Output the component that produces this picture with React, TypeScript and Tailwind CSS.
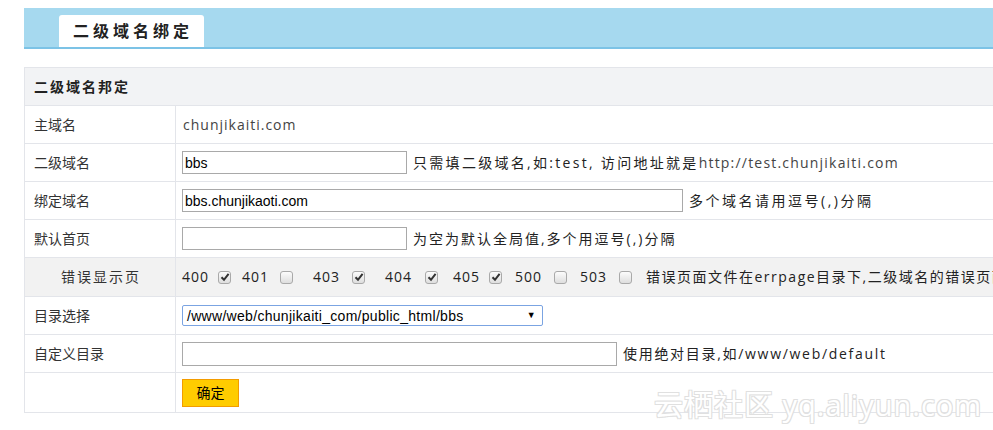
import React from "react";

const cjk = { fontFamily: '"Open Sans", "Noto Sans CJK SC", sans-serif' };
const arial = { fontFamily: '"Liberation Sans", Arial, "Noto Sans CJK SC", sans-serif' };

function Box({ checked }: { checked?: boolean }) {
  return (
    <span className="inline-flex h-[13px] w-[13px] items-center justify-center rounded-[3px] border border-[#a9a9a9] bg-gradient-to-b from-[#fcfcfc] to-[#dedede]">
      {checked && (
        <svg width="10" height="10" viewBox="0 0 10 10">
          <path d="M1.5 5.2 L4 7.8 L8.6 1.8" fill="none" stroke="#333" strokeWidth="2" />
        </svg>
      )}
    </span>
  );
}

function Row({
  label,
  children,
  gray,
  center,
  h = "h-[38px]",
}: {
  label?: string;
  children?: React.ReactNode;
  gray?: boolean;
  center?: boolean;
  h?: string;
}) {
  return (
    <div className={`flex ${h} border-b border-[#e3e5ea] ${gray ? "bg-[#f2f2f2]" : "bg-white"}`}>
      <div
        className={`flex w-[151px] shrink-0 items-center border-r border-[#e3e5ea] ${
          center ? "justify-center pl-[2px] tracking-[2px]" : "pl-[9px]"
        }`}
      >
        {label}
      </div>
      <div className="flex flex-1 items-center gap-[6px] pl-[6px]">{children}</div>
    </div>
  );
}

// code, checked, gap before box, gap after box
const codes: { c: string; on: boolean; ml: string; mr: string }[] = [
  { c: "400", on: true, ml: "ml-[9px]", mr: "mr-[11px]" },
  { c: "401", on: false, ml: "ml-[11px]", mr: "mr-[20px]" },
  { c: "403", on: true, ml: "ml-[12px]", mr: "mr-[20px]" },
  { c: "404", on: true, ml: "ml-[13px]", mr: "mr-[15px]" },
  { c: "405", on: true, ml: "ml-[9px]", mr: "mr-[13px]" },
  { c: "500", on: false, ml: "ml-[12px]", mr: "mr-[13px]" },
  { c: "503", on: false, ml: "ml-[12px]", mr: "mr-[14px]" },
];

export default function App() {
  return (
    <div className="relative h-[430px] w-[993px] overflow-hidden bg-white text-sm text-[#333]" style={cjk}>
      <div className="w-[1200px] pl-6 pt-2">
        {/* top bar */}
        <div className="flex h-[41px] items-end border-b-2 border-[#7cc3e6] bg-[#a6d9ef] pl-[35px]">
          <div className="flex h-[32px] w-[145px] items-center rounded-t-[3px] bg-white pl-[14px] text-base font-semibold tracking-[4px] text-[#222]">
            二级域名绑定
          </div>
        </div>

        {/* table */}
        <div className="mt-[18px] border-l border-t border-[#e3e5ea]">
          <div className="flex h-[38px] items-center border-b border-[#e3e5ea] bg-[#f2f3f5] pl-[9px] font-semibold tracking-[2px] text-[#222]">
            二级域名邦定
          </div>
          <Row label="主域名">
            <span className="pl-[1px] tracking-[1px] text-[#444]">chunjikaiti.com</span>
          </Row>
          <Row label="二级域名">
            <input
              readOnly
              value="bbs"
              className="h-[23px] w-[225px] border border-[#a9a9a9] px-[2px] text-sm text-black outline-none"
              style={arial}
            />
            <span className="whitespace-nowrap tracking-[2.3px] text-[#222]">
              只需填二级域名,如:test, 访问地址就是
              <span className="tracking-[1.2px] text-[#444]">http://test.chunjikaiti.com</span>
            </span>
          </Row>
          <Row label="绑定域名">
            <input
              readOnly
              value="bbs.chunjikaoti.com"
              className="h-[23px] w-[501px] border border-[#a9a9a9] px-[2px] text-sm text-black outline-none"
              style={arial}
            />
            <span className="tracking-[2.5px] text-[#222]">多个域名请用逗号(,)分隔</span>
          </Row>
          <Row label="默认首页">
            <input
              readOnly
              value=""
              className="h-[23px] w-[225px] border border-[#a9a9a9] px-[2px] text-sm outline-none"
              style={arial}
            />
            <span className="tracking-[2px] text-[#222]">为空为默认全局值,多个用逗号(,)分隔</span>
          </Row>
          <Row label="错误显示页" gray center h="h-[39px]">
            <div className="flex items-center whitespace-nowrap text-[#222]">
              {codes.map((k) => (
                <React.Fragment key={k.c}>
                  <span className="w-[27px] tracking-[1px]">{k.c}</span>
                  <span className={`${k.ml} ${k.mr} inline-flex`}>
                    <Box checked={k.on} />
                  </span>
                </React.Fragment>
              ))}
              <span className="tracking-[1.5px]">错误页面文件在errpage目录下,二级域名的错误页面文件在各自的目录下</span>
            </div>
          </Row>
          <Row label="目录选择">
            <div
              className="flex h-[21px] w-[361px] items-center justify-between rounded-[2px] border border-[#7ba4e2] bg-white pl-[4px] pr-[6px] text-sm tracking-[0.3px] text-black"
              style={arial}
            >
              <span>/www/web/chunjikaiti_com/public_html/bbs</span>
              <span className="text-[9px]">▼</span>
            </div>
          </Row>
          <Row label="自定义目录">
            <input
              readOnly
              value=""
              className="h-[24px] w-[435px] border border-[#a9a9a9] px-[2px] text-sm outline-none"
              style={arial}
            />
            <span className="tracking-[1.7px] text-[#222]">使用绝对目录,如/www/web/default</span>
          </Row>
          <Row h="h-[40px]">
            <button className="h-[28px] w-[57px] border border-[#f39c00] bg-[#ffcc00] text-sm text-black">确定</button>
          </Row>
        </div>
      </div>

      {/* watermark */}
      <div
        className="absolute left-[654px] top-[384px] text-[29px] tracking-[1px] text-white"
        style={{
          ...cjk,
          textShadow:
            "1px 1px 0 #e0e0e0, -1px -1px 0 #e0e0e0, 1px -1px 0 #e0e0e0, -1px 1px 0 #e0e0e0",
        }}
      >
        云栖社区 yq.aliyun.com
      </div>
    </div>
  );
}
